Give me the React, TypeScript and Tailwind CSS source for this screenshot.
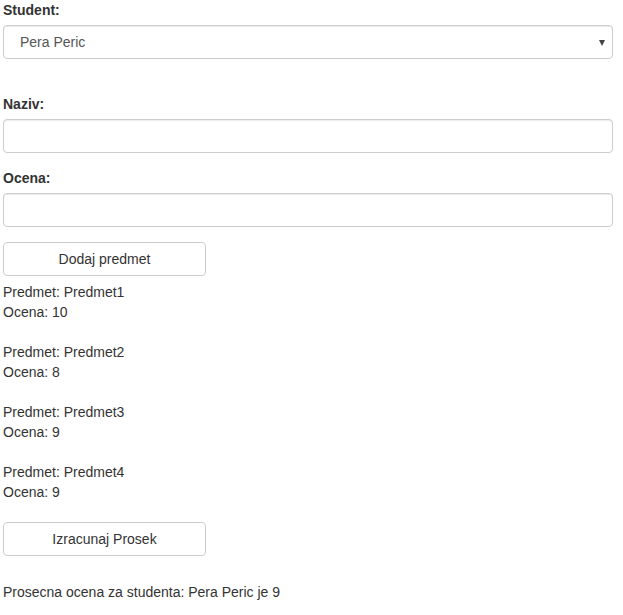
export default function App() {
  const predmeti = [
    { naziv: 'Predmet1', ocena: 10 },
    { naziv: 'Predmet2', ocena: 8 },
    { naziv: 'Predmet3', ocena: 9 },
    { naziv: 'Predmet4', ocena: 9 },
  ];

  return (
    <div
      className="bg-white text-[#333] text-[14px] leading-[20px] pl-[3px] w-[613px] min-h-[615px]"
      style={{ fontFamily: '"Liberation Sans", Arial, sans-serif' }}
    >
      <label className="block font-bold mb-[5px]">Student:</label>
      <div className="relative h-[34px] border border-[#ccc] rounded-[4px] flex items-center pl-[16px] text-[#555] shadow-[inset_0_1px_1px_rgba(0,0,0,0.075)]">
        Pera Peric
        <span className="absolute right-[7px] top-[14px] w-0 h-0 border-l-[3.5px] border-r-[3.5px] border-t-[6px] border-l-transparent border-r-transparent border-t-[#444]" />
      </div>

      <label className="block font-bold mt-[35px] mb-[5px]">Naziv:</label>
      <div className="h-[34px] border border-[#ccc] rounded-[4px] shadow-[inset_0_1px_1px_rgba(0,0,0,0.075)]" />

      <label className="block font-bold mt-[15px] mb-[5px]">Ocena:</label>
      <div className="h-[34px] border border-[#ccc] rounded-[4px] shadow-[inset_0_1px_1px_rgba(0,0,0,0.075)]" />

      <button className="mt-[15px] w-[203px] h-[34px] border border-[#ccc] rounded-[4px] bg-white text-[#333]">
        Dodaj predmet
      </button>

      <div className="mt-[6px]">
        {predmeti.map((p, i) => (
          <div key={i} className={i > 0 ? 'mt-[20px]' : ''}>
            <div>Predmet: {p.naziv}</div>
            <div>Ocena: {p.ocena}</div>
          </div>
        ))}
      </div>

      <button className="mt-[20px] w-[203px] h-[34px] border border-[#ccc] rounded-[4px] bg-white text-[#333]">
        Izracunaj Prosek
      </button>

      <p className="mt-[26px]">Prosecna ocena za studenta: Pera Peric je 9</p>
    </div>
  );
}
